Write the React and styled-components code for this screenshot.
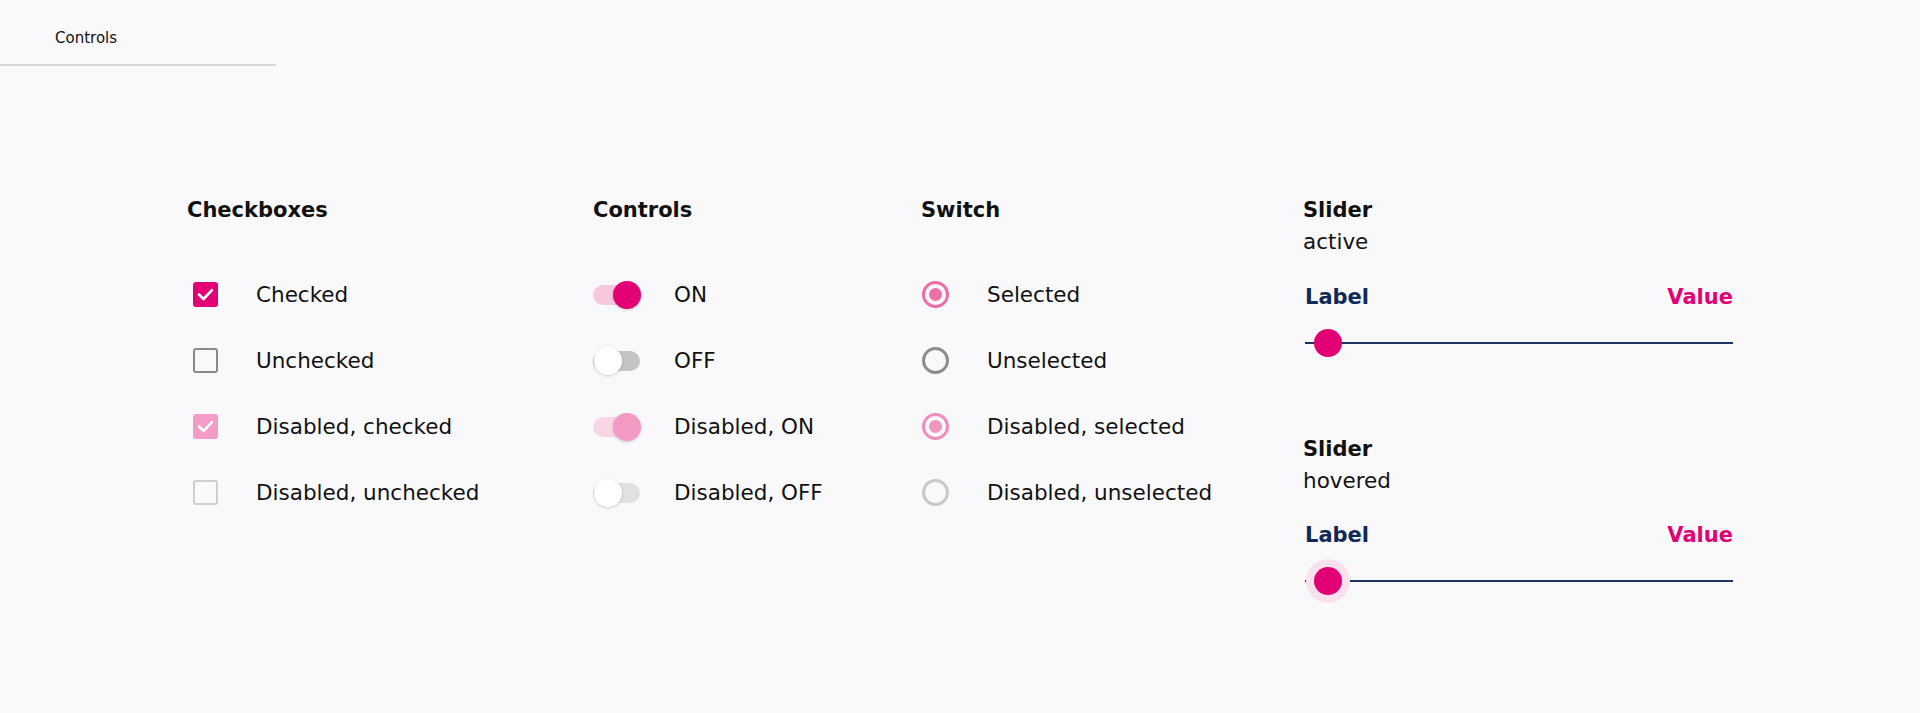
import React from "react";
import styled, { createGlobalStyle } from "styled-components";

const MAGENTA = "#e20074";
const NAVY = "#1b3461";

const GlobalStyle = createGlobalStyle`
  html, body {
    margin: 0;
    padding: 0;
    background: #f9f9fb;
  }
  body {
    font-family: "DejaVu Sans", "Liberation Sans", sans-serif;
    color: #111;
  }
`;

const Page = styled.div`
  min-height: 713px;
  background: #f9f9fb;
`;

const TabBar = styled.div`
  width: 276px;
  border-bottom: 2px solid #d6d6d6;
  box-sizing: border-box;
  padding: 28px 0 16px 55px;
`;

const Tab = styled.span`
  display: block;
  font-size: 15px;
  line-height: 20px;
  color: #111;
`;

const Grid = styled.div`
  display: grid;
  grid-template-columns: 406px 328px 382px 432px;
  padding: 128px 0 0 187px;
`;

const Column = styled.section`
  display: flex;
  flex-direction: column;
`;

const Heading = styled.h2`
  margin: 0;
  font-size: 21px;
  line-height: 32px;
  font-weight: 600;
  color: #111;
`;

const List = styled.div`
  display: flex;
  flex-direction: column;
  margin-top: 35.5px;
`;

const Row = styled.div`
  display: flex;
  align-items: center;
  height: 66px;
`;

const Slot = styled.div`
  width: ${(p) => p.$width}px;
  flex: none;
  display: flex;
  align-items: center;
`;

const Label = styled.span`
  font-size: 21.5px;
  line-height: 32px;
  color: #111;
  white-space: nowrap;
`;

/* checkbox */
const Box = styled.span`
  box-sizing: border-box;
  width: 25px;
  height: 25px;
  margin-left: 6px;
  border-radius: 3px;
  display: flex;
  align-items: center;
  justify-content: center;
  background: ${(p) => (p.$checked ? (p.$disabled ? "#f49cc7" : MAGENTA) : "transparent")};
  border: ${(p) =>
    p.$checked ? "none" : `2px solid ${p.$disabled ? "#cfcfd1" : "#8a8a8a"}`};
`;

const Check = () => (
  <svg width="17" height="13" viewBox="0 0 17 13" fill="none">
    <path d="M2 6.5l4.5 4.5L15 2.2" stroke="#fff" strokeWidth="2.6" strokeLinecap="round" strokeLinejoin="round" />
  </svg>
);

/* toggle */
const Toggle = styled.span`
  position: relative;
  width: 47px;
  height: 20px;
  border-radius: 10px;
  background: ${(p) => p.$track};
`;

const Knob = styled.span`
  position: absolute;
  top: -4px;
  left: ${(p) => (p.$on ? "20px" : "1px")};
  width: 28px;
  height: 28px;
  border-radius: 50%;
  background: ${(p) => p.$color};
  box-shadow: 0 1px 3px rgba(0, 0, 0, 0.18);
`;

/* radio */
const Radio = styled.span`
  box-sizing: border-box;
  width: 27px;
  height: 27px;
  margin-left: 1px;
  border-radius: 50%;
  border: 3px solid ${(p) => p.$color};
  display: flex;
  align-items: center;
  justify-content: center;
`;

const Dot = styled.span`
  width: 13px;
  height: 13px;
  border-radius: 50%;
  background: ${(p) => p.$color};
`;

/* slider */
const SliderBlock = styled.div`
  display: flex;
  flex-direction: column;
  width: 432px;
  & + & {
    margin-top: 68px;
  }
`;

const Sub = styled.span`
  font-size: 21.5px;
  line-height: 32px;
  color: #111;
`;

const SliderHead = styled.div`
  display: flex;
  justify-content: space-between;
  width: 430px;
  margin-top: 22.7px;
  padding-left: 2px;
  box-sizing: border-box;
`;

const SliderLabel = styled.span`
  font-size: 21px;
  line-height: 32px;
  font-weight: 600;
  color: ${(p) => p.$color};
`;

const Track = styled.div`
  position: relative;
  width: 428px;
  height: 44px;
  margin-top: 8px;
  margin-left: 2px;
  &::before {
    content: "";
    position: absolute;
    left: 0;
    right: 0;
    top: 21px;
    height: 2px;
    background: ${NAVY};
  }
`;

const Thumb = styled.span`
  position: absolute;
  top: 8px;
  left: ${(p) => p.$at}px;
  width: 28px;
  height: 28px;
  border-radius: 50%;
  background: ${MAGENTA};
  box-shadow: ${(p) => (p.$hover ? "0 0 0 8px #fbe1ed" : "none")};
`;

const checkboxes = [
  { label: "Checked", checked: true },
  { label: "Unchecked" },
  { label: "Disabled, checked", checked: true, disabled: true },
  { label: "Disabled, unchecked", disabled: true },
];

const toggles = [
  { label: "ON", on: true, track: "#f7c7dd", knob: MAGENTA },
  { label: "OFF", track: "#c4c4c6", knob: "#fff" },
  { label: "Disabled, ON", on: true, track: "#f9d6e6", knob: "#f39ac4" },
  { label: "Disabled, OFF", track: "#e1e1e4", knob: "#fff" },
];

const radios = [
  { label: "Selected", color: "#ee6ea9", dot: "#ec6fa8" },
  { label: "Unselected", color: "#8c8c8c" },
  { label: "Disabled, selected", color: "#f18dbb", dot: "#f095c0" },
  { label: "Disabled, unselected", color: "#c9c9cb" },
];

const sliders = [
  { state: "active" },
  { state: "hovered", hover: true },
];

export default function App() {
  return (
    <Page>
      <GlobalStyle />
      <TabBar>
        <Tab>Controls</Tab>
      </TabBar>
      <Grid>
        <Column>
          <Heading>Checkboxes</Heading>
          <List>
            {checkboxes.map((c) => (
              <Row key={c.label}>
                <Slot $width={69}>
                  <Box $checked={c.checked} $disabled={c.disabled}>
                    {c.checked && <Check />}
                  </Box>
                </Slot>
                <Label>{c.label}</Label>
              </Row>
            ))}
          </List>
        </Column>
        <Column>
          <Heading>Controls</Heading>
          <List>
            {toggles.map((t) => (
              <Row key={t.label}>
                <Slot $width={81}>
                  <Toggle $track={t.track}>
                    <Knob $on={t.on} $color={t.knob} />
                  </Toggle>
                </Slot>
                <Label>{t.label}</Label>
              </Row>
            ))}
          </List>
        </Column>
        <Column>
          <Heading>Switch</Heading>
          <List>
            {radios.map((r) => (
              <Row key={r.label}>
                <Slot $width={66}>
                  <Radio $color={r.color}>{r.dot && <Dot $color={r.dot} />}</Radio>
                </Slot>
                <Label>{r.label}</Label>
              </Row>
            ))}
          </List>
        </Column>
        <Column>
          {sliders.map((s) => (
            <SliderBlock key={s.state}>
              <Heading>Slider</Heading>
              <Sub>{s.state}</Sub>
              <SliderHead>
                <SliderLabel $color="#0f2a57">Label</SliderLabel>
                <SliderLabel $color={MAGENTA}>Value</SliderLabel>
              </SliderHead>
              <Track>
                <Thumb $at={9} $hover={s.hover} />
              </Track>
            </SliderBlock>
          ))}
        </Column>
      </Grid>
    </Page>
  );
}
